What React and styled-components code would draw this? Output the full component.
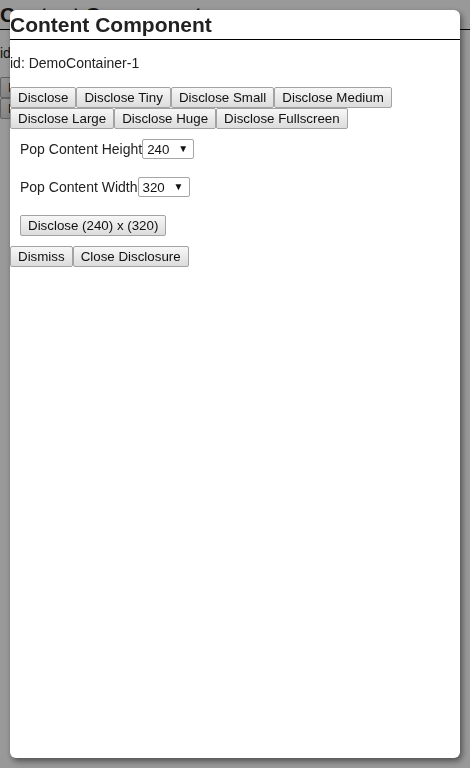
import React from "react";
import styled, { createGlobalStyle } from "styled-components";

const Global = createGlobalStyle`
  html, body { margin: 0; padding: 0; background: #fff; }
  body { font-family: "Liberation Sans", Arial, sans-serif; color: #222; }
`;

const Page = styled.div`
  width: 100%;
  height: 768px;
  overflow: hidden;
`;

const Overlay = styled.div`
  position: fixed;
  inset: 0;
  background: rgba(0, 0, 0, 0.4);
`;

const Dialog = styled.div`
  position: fixed;
  top: 10px;
  left: 10px;
  width: 450px;
  height: 748px;
  background: #fff;
  border-radius: 6px;
  box-shadow: 2px 3px 6px rgba(0, 0, 0, 0.5);
  overflow: hidden;
`;

const Title = styled.h2`
  margin: 0;
  font-size: 21px;
  font-weight: bold;
  line-height: 29px;
  border-bottom: 1px solid #000;
  color: #222;
`;

const IdLine = styled.p`
  margin: 14px 0 15px;
  font-size: 14px;
  line-height: 18px;
`;

const ButtonRow = styled.div`
  display: flex;
  flex-wrap: wrap;
`;

const Btn = styled.button`
  font-family: "Liberation Sans", Arial, sans-serif;
  font-size: 13.33px;
  line-height: 15px;
  padding: 2px 7px;
  margin: 0;
  color: #111;
  background: linear-gradient(#f7f7f7, #dcdcdc);
  border: 1px solid #a3a3a3;
  border-radius: 2px;
`;

const Section = styled.div`
  padding: 10px;
  display: flex;
  flex-direction: column;
  align-items: flex-start;
  gap: 18px;
`;

const Field = styled.label`
  display: flex;
  align-items: center;
  font-size: 14px;
  line-height: 20px;
`;

const SelectWrap = styled.span`
  position: relative;
  display: inline-flex;
`;

const Select = styled.select`
  appearance: none;
  -webkit-appearance: none;
  font-family: "Liberation Sans", Arial, sans-serif;
  font-size: 13.33px;
  width: 52px;
  height: 20px;
  padding: 0 0 0 4px;
  margin: 0;
  background: #fff;
  border: 1px solid #a6a6a6;
  border-radius: 2px;
  color: #111;
`;

const Arrow = styled.span`
  position: absolute;
  right: 6px;
  top: 4px;
  font-size: 10px;
  line-height: 11px;
  color: #111;
  pointer-events: none;
`;

const sizes = ["Disclose", "Disclose Tiny", "Disclose Small", "Disclose Medium", "Disclose Large", "Disclose Huge", "Disclose Fullscreen"];

function Dropdown({ value, options }) {
  return (
    <SelectWrap>
      <Select defaultValue={value}>
        {options.map((o) => (
          <option key={o}>{o}</option>
        ))}
      </Select>
      <Arrow>▼</Arrow>
    </SelectWrap>
  );
}

function Header() {
  return (
    <>
      <Title>Content Component</Title>
      <IdLine>id: DemoContainer-1</IdLine>
      <ButtonRow>
        {sizes.map((s) => (
          <Btn key={s}>{s}</Btn>
        ))}
      </ButtonRow>
    </>
  );
}

export default function App() {
  return (
    <>
      <Global />
      <Page aria-hidden="true">
        <Header />
      </Page>
      <Overlay />
      <Dialog>
        <Header />
        <Section>
          <Field>
            Pop Content Height
            <Dropdown value="240" options={["120", "240", "360", "480"]} />
          </Field>
          <Field>
            Pop Content Width
            <Dropdown value="320" options={["160", "320", "480", "640"]} />
          </Field>
          <Btn>Disclose (240) x (320)</Btn>
        </Section>
        <ButtonRow>
          <Btn>Dismiss</Btn>
          <Btn>Close Disclosure</Btn>
        </ButtonRow>
      </Dialog>
    </>
  );
}
